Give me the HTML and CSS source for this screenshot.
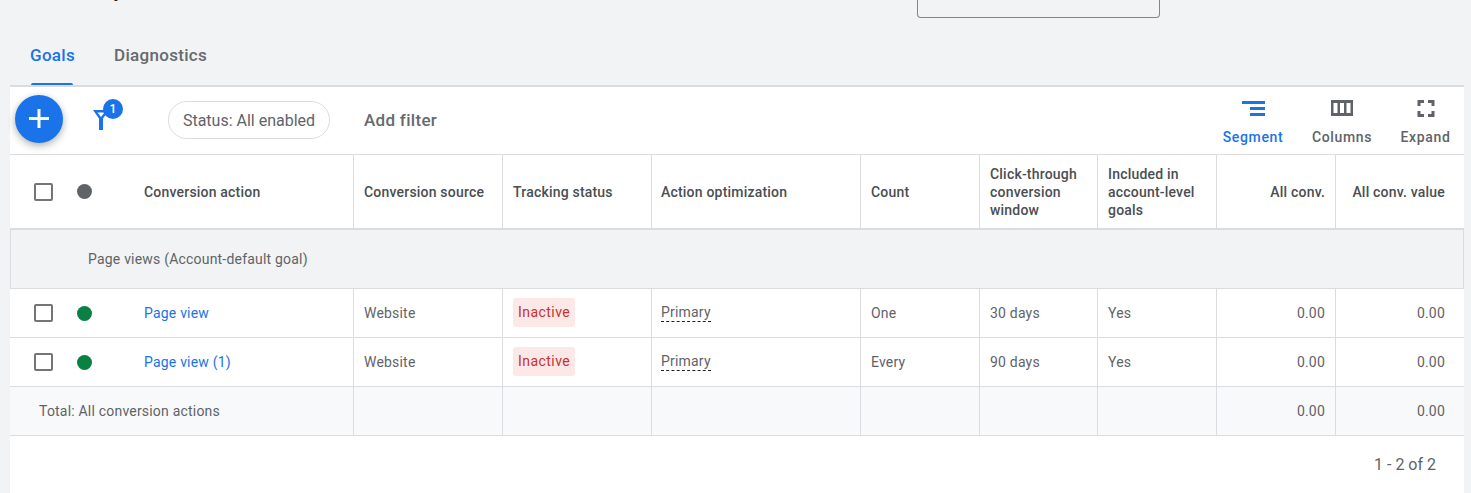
FILE: index.html
```html
<!DOCTYPE html>
<html lang="en">
<head>
<meta charset="utf-8">
<title>Goals</title>
<link rel="stylesheet" href="styles.css">
</head>
<body>
<div class="top">
  <div class="title">Summary</div>
  <div class="select"></div>
</div>
<nav class="tabs">
  <a class="tab active">Goals</a>
  <a class="tab">Diagnostics</a>
</nav>
<main class="card">
  <div class="toolbar">
    <button class="fab" aria-label="Add">
      <svg width="24" height="24" viewBox="0 0 24 24"><path d="M10.500 2h3v8h8.500v3h-8.500v8h-3v-8H2v-3h8.500z" fill="#fff"/></svg>
    </button>
    <div class="filter">
      <svg width="20" height="22" viewBox="0 0 20 22"><path d="M2 1h16l-6 8.500V21H8V9.500zM6.500 3.500l3.500 4.500 3.500-4.500z" fill="#1a73e8" fill-rule="evenodd"/></svg>
      <span class="badge">1</span>
    </div>
    <div class="chip">Status: All enabled</div>
    <div class="add-filter">Add filter</div>
    <div class="tools">
      <div class="tool tool-blue">
        <svg width="24" height="24" viewBox="0 0 24 24"><path d="M1 5h23v3H1zM9 11h15v3H9zM9 17h15v3H9z" fill="#1a73e8"/></svg>
        <span>Segment</span>
      </div>
      <div class="tool">
        <svg width="24" height="24" viewBox="0 0 24 24"><path d="M1 4h22v16H1zM3.500 7v10h4V7zM10 7v10h4V7zM16.500 7v10h4V7z" fill="#5f6368" fill-rule="evenodd"/></svg>
        <span>Columns</span>
      </div>
      <div class="tool">
        <svg width="24" height="24" viewBox="0 0 24 24"><path d="M3.500 4h6.500v3H6.500v3h-3zM14 4h6.500v6h-3V7H14zM3.500 15h3v3H10v3H3.500zM17.500 15h3v6H14v-3h3.500z" fill="#5f6368"/></svg>
        <span>Expand</span>
      </div>
    </div>
  </div>
  <table class="grid">
    <colgroup>
      <col class="c1"><col class="c2"><col class="c3"><col class="c4"><col class="c5"><col class="c6"><col class="c7"><col class="c8"><col class="c9">
    </colgroup>
    <thead>
      <tr>
        <th><div class="lead"><span class="box"></span><span class="dot dot-grey"></span><span>Conversion action</span></div></th>
        <th>Conversion source</th>
        <th>Tracking status</th>
        <th>Action optimization</th>
        <th>Count</th>
        <th>Click-through conversion window</th>
        <th>Included in account-level goals</th>
        <th class="num">All conv.</th>
        <th class="num">All conv. value</th>
      </tr>
    </thead>
    <tbody>
      <tr class="group"><td colspan="9">Page views (Account-default goal)</td></tr>
      <tr class="row">
        <td><div class="lead"><span class="box"></span><span class="dot"></span><a class="link">Page view</a></div></td>
        <td>Website</td>
        <td><span class="status">Inactive</span></td>
        <td><span class="dashed">Primary</span></td>
        <td>One</td>
        <td>30 days</td>
        <td>Yes</td>
        <td class="num">0.00</td>
        <td class="num">0.00</td>
      </tr>
      <tr class="row">
        <td><div class="lead"><span class="box"></span><span class="dot"></span><a class="link">Page view (1)</a></div></td>
        <td>Website</td>
        <td><span class="status">Inactive</span></td>
        <td><span class="dashed">Primary</span></td>
        <td>Every</td>
        <td>90 days</td>
        <td>Yes</td>
        <td class="num">0.00</td>
        <td class="num">0.00</td>
      </tr>
      <tr class="row total">
        <td class="total-label">Total: All conversion actions</td>
        <td></td><td></td><td></td><td></td><td></td><td></td>
        <td class="num">0.00</td>
        <td class="num">0.00</td>
      </tr>
    </tbody>
  </table>
  <div class="pager">1 - 2 of 2</div>
</main>
</body>
</html>
```

FILE: styles.css
```css
* { box-sizing: border-box; }
html, body { margin: 0; height: 493px; overflow: hidden; }
body { background: #f1f3f4; font-family: Roboto, "Liberation Sans", sans-serif; color: #3c4043; }

.top { height: 18px; display: flex; justify-content: space-between; padding: 0 311px 0 30px; overflow: hidden; }
.title { font-size: 22px; line-height: 26px; margin-top: -24px; color: #202124; }
.select { width: 243px; height: 18px; border: 1px solid #80868b; border-top: 0; border-radius: 0 0 4px 4px; }

.tabs { height: 67px; display: flex; padding-left: 30px; }
.tab { padding-top: 27px; font-size: 17px; line-height: 20px; font-weight: 500; color: #666a6e; letter-spacing: .3px; position: relative; }
.tab.active { width: 84px; color: #1a73e8; }
.tab.active::after { content: ""; position: absolute; left: 1px; bottom: 0; width: 42px; height: 2px; border-radius: 2px 2px 0 0; background: #1a73e8; }

.card { margin: 0 7px 0 10px; height: 408px; background: #fff; border-top: 2px solid #dadce0; }

.toolbar { height: 68px; display: flex; align-items: flex-start; border-bottom: 1px solid #dadce0; }
.fab { width: 48px; height: 48px; margin: 8px 0 0 5px; padding: 0; border: 0; border-radius: 50%; background: #1a73e8; display: flex; align-items: center; justify-content: center; box-shadow: 0 2px 6px rgba(60,64,67,.3), 0 4px 10px rgba(60,64,67,.15); }
.filter { width: 20px; height: 22px; margin: 22px 0 0 28px; position: relative; }
.filter svg { display: block; }
.badge { position: absolute; left: 12px; top: -10px; width: 20px; height: 20px; border-radius: 50%; background: #1a73e8; color: #fff; font-size: 12px; font-weight: 500; line-height: 20px; text-align: center; }
.chip { margin: 14px 0 0 57px; width: 162px; height: 38px; border: 1px solid #dadce0; border-radius: 19px; font-size: 16px; line-height: 37px; text-align: center; color: #5f6368; }
.add-filter { margin: 14px 0 0 34px; font-size: 17px; line-height: 38px; font-weight: 500; color: #666a6e; letter-spacing: .3px; }
.tools { margin-left: auto; display: flex; }
.tool { width: 60px; display: flex; flex-direction: column; align-items: center; font-size: 14px; font-weight: 500; color: #5f6368; letter-spacing: .65px; white-space: nowrap; }
.tool svg { margin-top: 9px; }
.tool span { margin-top: 7px; line-height: 20px; }
.tool-blue { color: #1a73e8; }
.tool + .tool { margin-left: 29px; }
.tool:last-child { width: 49px; margin-right: 14px; }

.grid { width: 1454px; table-layout: fixed; border-collapse: separate; border-spacing: 0; font-size: 14px; letter-spacing: .2px; }
.c1 { width: 344px; } .c2 { width: 149px; } .c3 { width: 149px; } .c4 { width: 209px; } .c5 { width: 119px; } .c6 { width: 118px; } .c7 { width: 119px; } .c8 { width: 119px; } .c9 { width: 128px; }
th { height: 75px; padding: 0 10px; font-weight: 500; font-size: 14px; line-height: 18px; text-align: left; color: #4a4e52; border-right: 1px solid #dadce0; border-bottom: 2px solid #dadce0; }
th:last-child, td:last-child { border-right: 0; padding-right: 19px; }
th:first-child, .row td:first-child { padding: 0; }
th:nth-child(4), td:nth-child(4) { padding-left: 9px; }
td { padding: 0 10px; border-right: 1px solid #dadce0; border-bottom: 1px solid #dadce0; color: #5f6368; line-height: 20px; }
.num { text-align: right; }
.group td { height: 59px; padding-left: 77px; background: #f1f3f4; border-left: 1px solid #dadce0; border-right: 1px solid #dadce0; }
.row td { height: 49px; }
.total td { background: #f8f9fa; }
.row td.total-label { padding-left: 29px; }

.lead { display: flex; align-items: center; }
.box { width: 19px; height: 18px; margin-left: 24px; border: 2px solid #757575; border-radius: 2px; flex: none; }
.dot { width: 15px; height: 15px; margin: 0 52px 0 24px; border-radius: 50%; background: #0b8043; flex: none; }
.dot-grey { background: #5f6368; }
.link { color: #1a73e8; }
.status { display: block; width: fit-content; height: 29px; margin-bottom: 1px; padding: 0 5px; background: #fce8e6; color: #c9302c; border-radius: 3px; line-height: 28px; letter-spacing: .45px; }
.dashed { display: block; width: fit-content; margin-bottom: 2px; line-height: 18px; border-bottom: 1px dashed #202124; }
.pager { padding: 11px 28px 0 0; text-align: right; font-size: 16px; line-height: 36px; color: #5f6368; }
```
